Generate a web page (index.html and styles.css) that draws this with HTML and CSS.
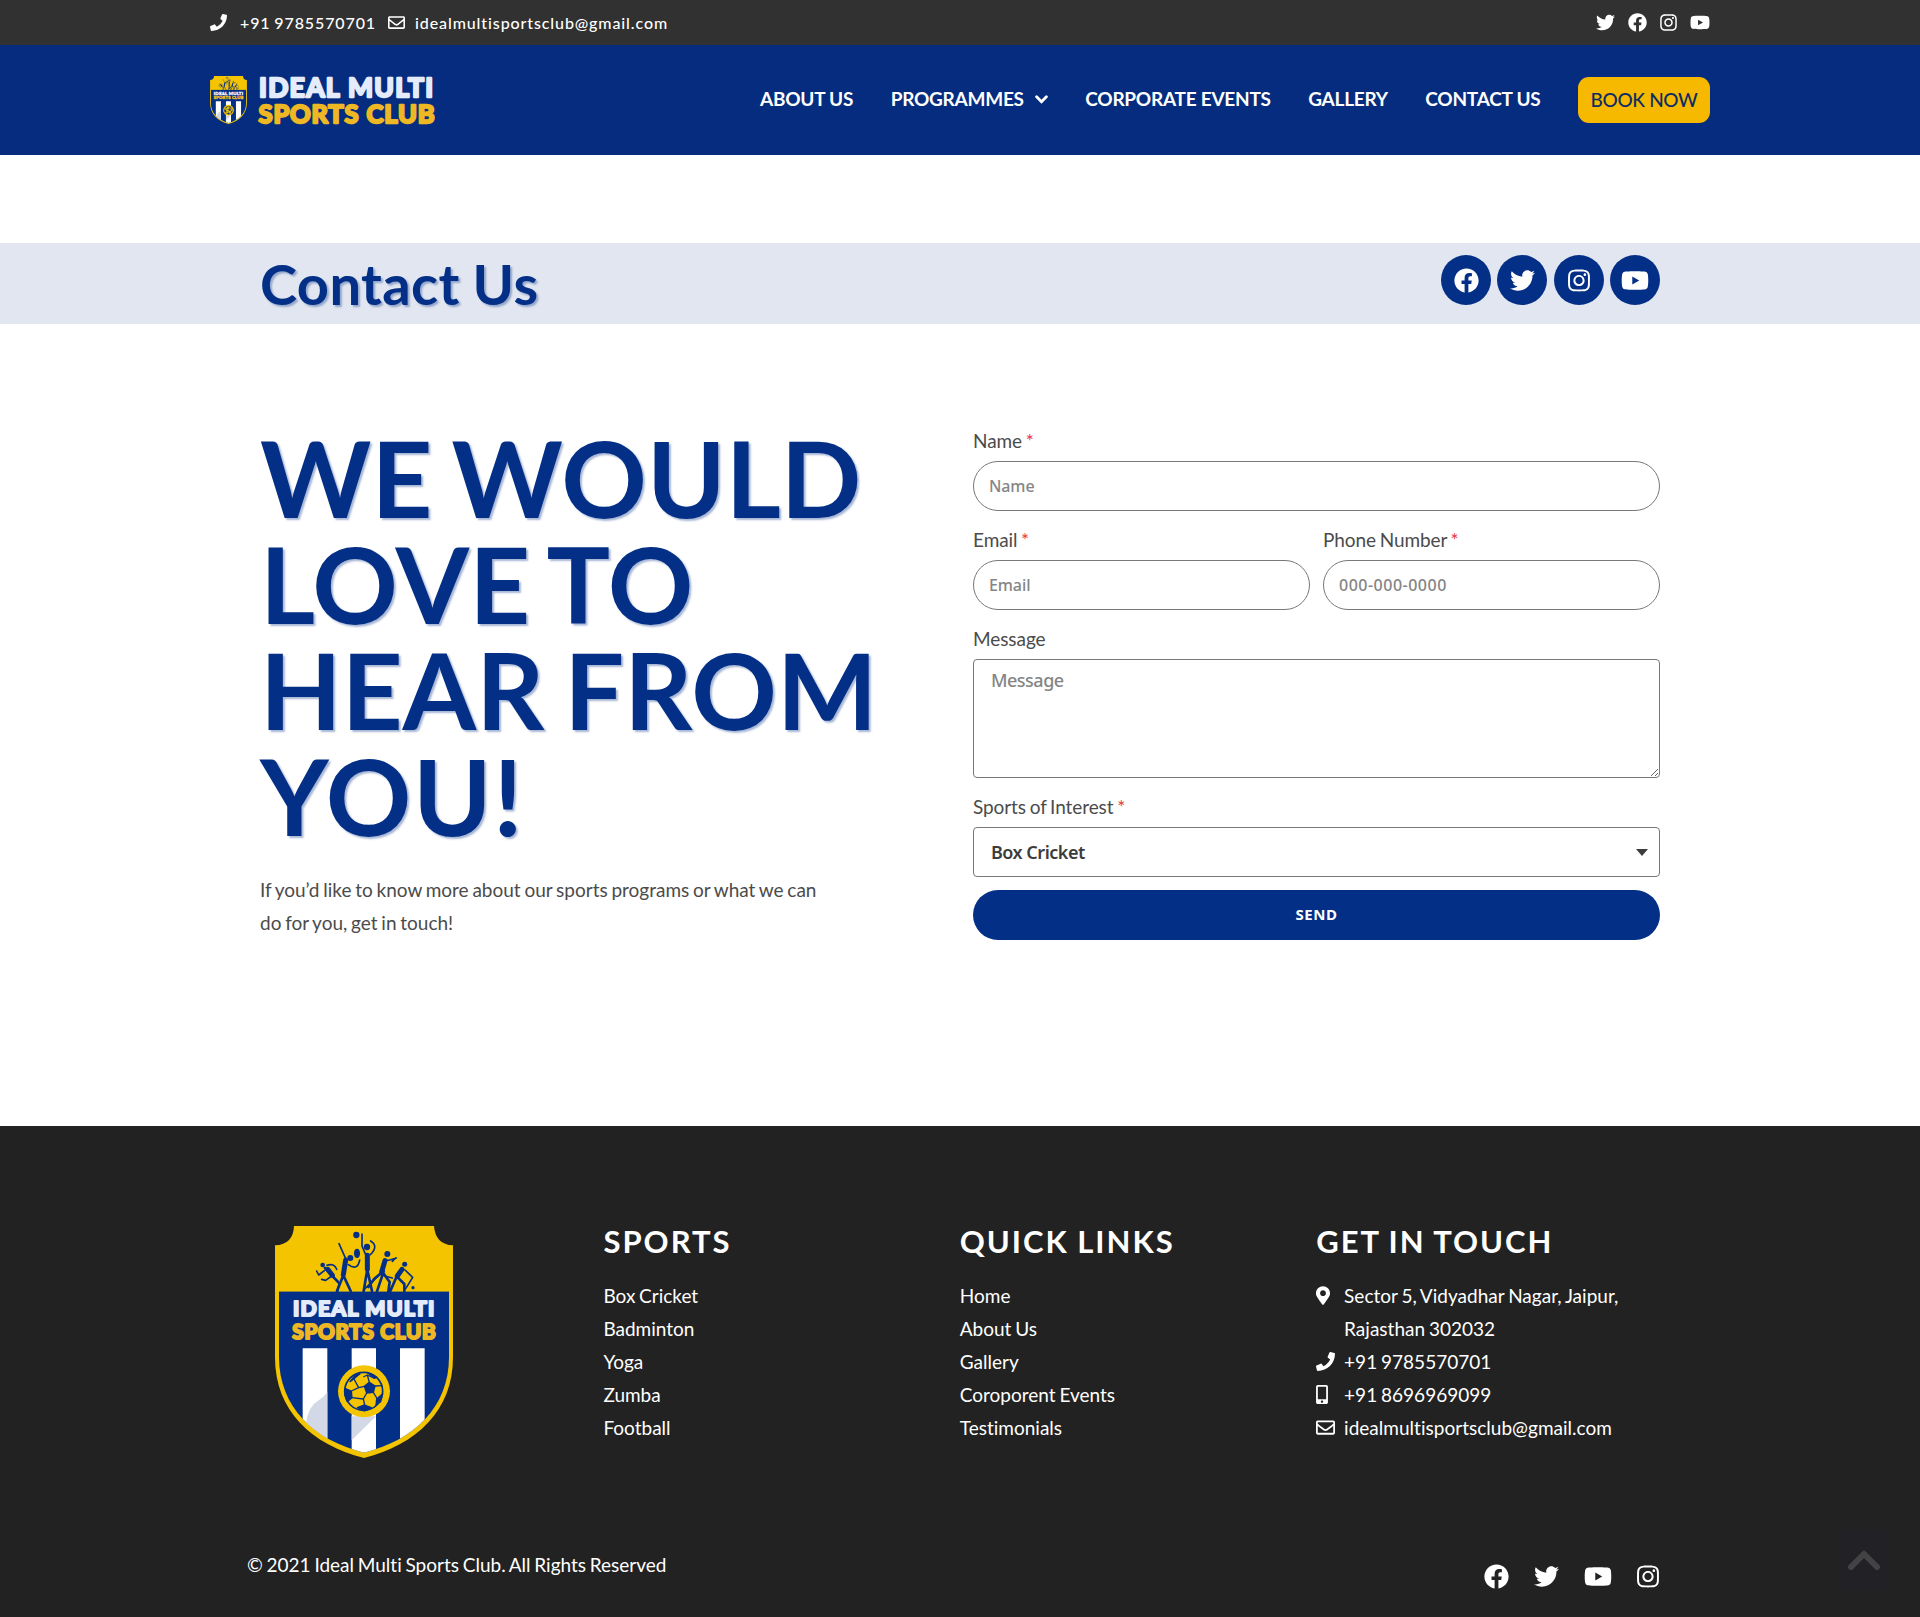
FILE: index.html
```html
<!DOCTYPE html>
<html lang="en">
<head>
<meta charset="utf-8">
<title>Contact Us - Ideal Multi Sports Club</title>
<link rel="stylesheet" href="styles.css">
</head>
<body>
<svg class="defs" width="0" height="0" aria-hidden="true">
  <symbol id="phone" viewBox="0 0 512 512"><path d="M493.4 24.6l-104-24c-11.3-2.6-22.9 3.3-27.5 13.9l-48 112c-4.2 9.8-1.4 21.3 6.9 28l60.6 49.6c-36 76.7-98.9 140.5-177.2 177.2l-49.6-60.6c-6.8-8.3-18.2-11.1-28-6.9l-112 48C3.9 366.5-2 378.1.6 389.4l24 104C27.1 504.2 36.7 512 48 512c256.1 0 464-207.5 464-464 0-11.2-7.7-20.9-18.6-23.4z"/></symbol>
  <symbol id="envelope" viewBox="0 0 512 512"><path d="M464 64H48C21.49 64 0 85.49 0 112v288c0 26.51 21.49 48 48 48h416c26.51 0 48-21.49 48-48V112c0-26.51-21.49-48-48-48zm0 48v40.805c-22.422 18.259-58.168 46.651-134.587 106.49-16.841 13.247-50.201 45.072-73.413 44.701-23.208.375-56.579-31.459-73.413-44.701C106.18 199.465 70.425 171.067 48 152.805V112h416zM48 400V214.398c22.914 18.251 55.409 43.862 104.938 82.646 21.857 17.205 60.134 55.186 103.062 54.955 42.717.231 80.509-37.199 103.053-54.947 49.528-38.783 82.032-64.401 104.947-82.653V400H48z"/></symbol>
  <symbol id="twitter" viewBox="0 0 512 512"><path d="M459.37 151.716c.325 4.548.325 9.097.325 13.645 0 138.72-105.583 298.558-298.558 298.558-59.452 0-114.68-17.219-161.137-47.106 8.447.974 16.568 1.299 25.34 1.299 49.055 0 94.213-16.568 130.274-44.832-46.132-.975-84.792-31.188-98.112-72.772 6.498.974 12.995 1.624 19.818 1.624 9.421 0 18.843-1.3 27.614-3.573-48.081-9.747-84.143-51.98-84.143-102.985v-1.299c13.969 7.797 30.214 12.67 47.431 13.319-28.264-18.843-46.781-51.005-46.781-87.391 0-19.492 5.197-37.36 14.294-52.954 51.655 63.675 129.3 105.258 216.365 109.807-1.624-7.797-2.599-15.918-2.599-24.04 0-57.828 46.782-104.934 104.934-104.934 30.213 0 57.502 12.67 76.67 33.137 23.715-4.548 46.456-13.32 66.599-25.34-7.798 24.366-24.366 44.833-46.132 57.827 21.117-2.273 41.584-8.122 60.426-16.243-14.292 20.791-32.161 39.308-52.628 54.253z"/></symbol>
  <symbol id="facebook" viewBox="0 0 512 512"><path d="M504 256C504 119 393 8 256 8S8 119 8 256c0 123.78 90.69 226.38 209.25 245V327.69h-63V256h63v-54.64c0-62.15 37-96.48 93.67-96.48 27.14 0 55.52 4.84 55.52 4.84v61h-31.28c-30.8 0-40.41 19.12-40.41 38.73V256h68.78l-11 71.69h-57.78V501C413.31 482.38 504 379.78 504 256z"/></symbol>
  <symbol id="instagram" viewBox="0 0 448 512"><path d="M224.1 141c-63.6 0-114.9 51.3-114.9 114.9s51.3 114.9 114.9 114.9S339 319.5 339 255.9 287.7 141 224.1 141zm0 189.6c-41.1 0-74.7-33.5-74.7-74.7s33.5-74.7 74.7-74.7 74.7 33.5 74.7 74.7-33.6 74.7-74.7 74.7zm146.4-194.3c0 14.9-12 26.8-26.8 26.8-14.9 0-26.8-12-26.8-26.8s12-26.8 26.8-26.8 26.8 12 26.8 26.8zm76.1 27.2c-1.7-35.9-9.9-67.7-36.2-93.9-26.2-26.2-58-34.4-93.9-36.2-37-2.1-147.9-2.1-184.9 0-35.8 1.7-67.6 9.9-93.9 36.1s-34.4 58-36.2 93.9c-2.1 37-2.1 147.9 0 184.9 1.7 35.9 9.9 67.7 36.2 93.9s58 34.4 93.9 36.2c37 2.1 147.9 2.1 184.9 0 35.9-1.7 67.7-9.9 93.9-36.2 26.2-26.2 34.4-58 36.2-93.9 2.1-37 2.1-147.8 0-184.8zM398.8 388c-7.8 19.6-22.9 34.7-42.6 42.6-29.5 11.7-99.5 9-132.1 9s-102.7 2.6-132.1-9c-19.6-7.8-34.7-22.9-42.6-42.6-11.7-29.5-9-99.5-9-132.1s-2.6-102.7 9-132.1c7.8-19.6 22.9-34.7 42.6-42.6 29.5-11.7 99.5-9 132.1-9s102.7-2.6 132.1 9c19.6 7.8 34.7 22.9 42.6 42.6 11.7 29.5 9 99.5 9 132.1s2.7 102.7-9 132.1z"/></symbol>
  <symbol id="youtube" viewBox="0 0 576 512"><path d="M549.655 124.083c-6.281-23.65-24.787-42.276-48.284-48.597C458.781 64 288 64 288 64S117.22 64 74.629 75.486c-23.497 6.322-42.003 24.947-48.284 48.597-11.412 42.867-11.412 132.305-11.412 132.305s0 89.438 11.412 132.305c6.281 23.65 24.787 41.5 48.284 47.821C117.22 448 288 448 288 448s170.78 0 213.371-11.486c23.497-6.321 42.003-24.171 48.284-47.821 11.412-42.867 11.412-132.305 11.412-132.305s0-89.438-11.412-132.305zm-317.51 213.508V175.185l142.739 81.205-142.739 81.201z"/></symbol>
  <symbol id="marker" viewBox="0 0 384 512"><path d="M172.268 501.67C26.97 291.031 0 269.413 0 192 0 85.961 85.961 0 192 0s192 85.961 192 192c0 77.413-26.97 99.031-172.268 309.67-9.535 13.774-29.93 13.773-39.464 0zM192 272c44.183 0 80-35.817 80-80s-35.817-80-80-80-80 35.817-80 80 35.817 80 80 80z"/></symbol>
  <symbol id="mobile" viewBox="0 0 320 512"><path d="M272 0H48C21.5 0 0 21.5 0 48v416c0 26.5 21.5 48 48 48h224c26.5 0 48-21.5 48-48V48c0-26.5-21.5-48-48-48zM160 480c-17.7 0-32-14.3-32-32s14.3-32 32-32 32 14.3 32 32-14.3 32-32 32zm112-108c0 6.6-5.4 12-12 12H60c-6.6 0-12-5.4-12-12V60c0-6.6 5.4-12 12-12h200c6.6 0 12 5.4 12 12v312z"/></symbol>
  <symbol id="crest" viewBox="75 47 534 696">
    <clipPath id="field"><path d="M87 243H597V440C597 592 490 690 342 727C194 690 87 592 87 440Z"/></clipPath>
    <path fill="#f4c400" d="M132 47H552Q556 103 609 105V440C609 602 500 702 342 743C184 702 75 602 75 440V105Q130 103 132 47Z"/>
    <g clip-path="url(#field)">
      <path fill="#042f86" d="M75 243H609V743H75Z"/>
      <path fill="#fff" d="M158 414H232V743H158ZM305 414H378V743H305ZM450 414H524V743H450Z"/>
      <path fill="#d3d8e7" d="M168 640Q174 588 206 570Q222 560 232 546V700H168ZM305 690L378 618H305Z"/>
    </g>
    <g transform="translate(165 45)" fill="none" stroke="#042f86" stroke-width="8" stroke-linecap="round" stroke-linejoin="round">
      <path stroke-width="5" d="M35 137L41 149L58 136M66 120Q88 112 95 132M80 152L62 165L50 162M85 155L102 175L98 200M102 55L122 100M130 118Q158 138 164 104M171 26V62L182 88M197 47Q222 62 196 88M240 106L254 104L274 98M226 145L180 190M300 134L323 156L302 190M262 158L238 152M272 98L262 108"/>
      <path d="M60 128L82 152L98 168M115 150L96 197M115 150L137 197M186 138L176 198M188 138L201 198M226 145L208 160L190 185M234 142L254 170L250 198M274 156L256 197M278 156L298 176V198M236 138L216 198"/>
      <path stroke-width="15" d="M68 132L82 150M122 104L115 148M187 90V132M240 106L230 140M291 132L277 152"/>
      <g fill="#042f86" stroke="none"><circle cx="53" cy="119" r="7"/><circle cx="136" cy="98" r="9"/><ellipse cx="156" cy="84" rx="9" ry="14"/><circle cx="154" cy="29" r="9.5"/><circle cx="186" cy="65" r="9.5"/><circle cx="247" cy="86" r="9"/><circle cx="299" cy="117" r="7.5"/><circle cx="324" cy="187" r="5"/></g>
    </g>
    <g class="crest-text" stroke-width="6.5">
      <text x="129" y="318" font-size="64" textLength="424" lengthAdjust="spacing" fill="#e4ebfa" stroke="#e4ebfa">IDEAL MULTI</text>
      <text x="127" y="385" font-size="62" textLength="430" lengthAdjust="spacing" fill="#edb823" stroke="#edb823">SPORTS CLUB</text>
    </g>
    <circle cx="342" cy="543" r="78" fill="#f4c400"/>
    <circle cx="341" cy="543" r="57" fill="#f4c400" stroke="#042f86" stroke-width="5"/>
    <g fill="#042f86" stroke="#042f86" stroke-width="4" stroke-linejoin="round">
      <path d="M343 528L358 516L375 527L370 546L350 548ZM300 514L316 494L330 490L308 508ZM285 534L304 542L306 562L292 574L284 552ZM322 592L344 584L364 592L344 602ZM380 566L398 550L392 574L378 584ZM352 487L380 500L374 504Z"/>
      <path fill="none" d="M343 528L326 532L304 542M326 532L312 506M358 516L352 494M375 527L396 526M370 546L382 566M350 548L340 566L344 584M340 566L306 562M340 500L352 494L374 504"/>
    </g>
  </symbol>
</svg>

<div class="topbar">
  <div class="wrap topbar-row">
    <div class="contact">
      <svg class="icon16"><use href="#phone"/></svg><span class="tel">+91 9785570701</span>
      <svg class="icon16"><use href="#envelope"/></svg><span class="mail">idealmultisportsclub@gmail.com</span>
    </div>
    <div class="top-social">
      <svg width="19" height="19"><use href="#twitter"/></svg>
      <svg width="19" height="19"><use href="#facebook"/></svg>
      <svg width="17" height="19"><use href="#instagram"/></svg>
      <svg width="20" height="19"><use href="#youtube"/></svg>
    </div>
  </div>
</div>

<header class="header">
  <div class="wrap header-row">
    <a class="brand">
      <svg class="brand-crest"><use href="#crest"/></svg>
      <svg class="brand-name crest-text" viewBox="0 0 178 52" stroke-width="2.4">
        <text x="2" y="22.5" font-size="26.5" textLength="174" lengthAdjust="spacing" fill="#e4ebfa" stroke="#e4ebfa">IDEAL MULTI</text>
        <text x="1.5" y="48.9" font-size="25.5" textLength="176" lengthAdjust="spacing" fill="#edb823" stroke="#edb823">SPORTS CLUB</text>
      </svg>
    </a>
    <nav class="nav">
      <a>ABOUT US</a>
      <a>PROGRAMMES<svg class="caret" viewBox="0 0 12 8"><path d="M1.5 1.5L6 6L10.5 1.5"/></svg></a>
      <a>CORPORATE EVENTS</a>
      <a>GALLERY</a>
      <a>CONTACT US</a>
      <a class="book">BOOK NOW</a>
    </nav>
  </div>
</header>

<section class="banner">
  <div class="inner banner-row">
    <h1>Contact Us</h1>
    <div class="round-social">
      <a><svg width="25" height="25"><use href="#facebook"/></svg></a>
      <a><svg width="25" height="25"><use href="#twitter"/></svg></a>
      <a><svg width="22" height="25"><use href="#instagram"/></svg></a>
      <a><svg width="28" height="25"><use href="#youtube"/></svg></a>
    </div>
  </div>
</section>

<main class="inner main">
  <div class="pitch">
    <h2>WE WOULD LOVE TO HEAR FROM <span class="you">YOU!</span></h2>
    <p>If you’d like to know more about our sports programs or what we can do for you, get in touch!</p>
  </div>
  <form class="form">
    <label class="field"><span>Name <i>*</i></span><input class="pill" placeholder="Name"></label>
    <div class="pair">
      <label class="field"><span>Email <i>*</i></span><input class="pill" placeholder="Email"></label>
      <label class="field"><span>Phone Number <i>*</i></span><input class="pill digits" placeholder="000-000-0000"></label>
    </div>
    <label class="field"><span>Message</span><textarea placeholder="Message"></textarea></label>
    <label class="field select"><span>Sports of Interest <i>*</i></span>
      <select><option>Box Cricket</option></select></label>
    <button type="button">SEND</button>
  </form>
</main>

<footer class="footer">
  <div class="footer-cols">
    <div class="col-logo"><svg class="footer-crest"><use href="#crest"/></svg></div>
    <div><h3>SPORTS</h3>
      <ul><li>Box Cricket</li><li>Badminton</li><li>Yoga</li><li>Zumba</li><li>Football</li></ul></div>
    <div><h3>QUICK LINKS</h3>
      <ul><li>Home</li><li>About Us</li><li>Gallery</li><li>Coroporent Events</li><li>Testimonials</li></ul></div>
    <div><h3>GET IN TOUCH</h3>
      <ul class="touch">
        <li><svg width="14" height="19"><use href="#marker"/></svg><span>Sector 5, Vidyadhar Nagar, Jaipur,<br>Rajasthan 302032</span></li>
        <li><svg width="19" height="19"><use href="#phone"/></svg><span>+91 9785570701</span></li>
        <li><svg width="12" height="19"><use href="#mobile"/></svg><span>+91 8696969099</span></li>
        <li><svg width="19" height="19"><use href="#envelope"/></svg><span>idealmultisportsclub@gmail.com</span></li>
      </ul></div>
  </div>
  <div class="footer-end">
    <p>© 2021 Ideal Multi Sports Club. All Rights Reserved</p>
    <div class="end-social">
      <svg width="25" height="25"><use href="#facebook"/></svg>
      <svg width="25" height="25"><use href="#twitter"/></svg>
      <svg width="28" height="25"><use href="#youtube"/></svg>
      <svg width="22" height="25"><use href="#instagram"/></svg>
    </div>
  </div>
  <a class="to-top"><svg viewBox="0 0 34 22"><path d="M4 18L17 5L30 18"/></svg></a>
</footer>
</body>
</html>
```
FILE: styles.css
```css
* { box-sizing: border-box; }
body { margin: 0; background: #fff; color: #4b4b4b; font: 19px/33px Lato, sans-serif; word-spacing: -1.1px; font-variant-ligatures: none; }
h1, h2, h3, p, ul { margin: 0; padding: 0; }
ul { list-style: none; }
svg { display: block; fill: currentColor; flex: none; }
.defs { position: absolute; }
.wrap { width: 1500px; margin: 0 auto; }
.inner { width: 1400px; margin: 0 auto; }

.topbar { background: #313131; color: #fff; }
.topbar-row { height: 45px; display: flex; justify-content: space-between; align-items: center; }
.contact { display: flex; align-items: center; font-size: 16px; font-weight: 500; letter-spacing: .89px; }
.icon16 { width: 17px; height: 17px; }
.tel { margin: 0 12px 0 13px; }
.mail { margin-left: 10px; }
.top-social { display: flex; gap: 13px; margin-top: -1px; }

.header { background: #052c7e; color: #fff; }
.header-row { height: 110px; display: flex; justify-content: space-between; align-items: center; }
.brand { display: flex; gap: 10px; align-items: center; }
.brand-crest { width: 37px; height: 48px; }
.brand-name { width: 178px; height: 52px; }
.crest-text { font-family: Lato, sans-serif; font-weight: 700; word-spacing: 0; stroke-linejoin: round; }
.nav { display: flex; align-items: center; gap: 37.5px; font-weight: 700; letter-spacing: -.25px; word-spacing: 0; }
.nav a { display: flex; align-items: center; padding-bottom: 3px; }
.caret { width: 13px; height: 9px; margin: 1px 0 0 11px; fill: none; stroke: #fff; stroke-width: 2.6; stroke-linecap: round; }
.nav .book { width: 132px; height: 46px; padding: 0 0 1px; justify-content: center; border-radius: 11px; background: #f7b900; color: #0d2d66; font-weight: 500; letter-spacing: -.35px; }

.banner { margin-top: 88px; background: #e1e6f0; }
.banner-row { height: 81px; display: flex; justify-content: space-between; }
h1, h2 { color: #042f86; font-weight: 700; text-shadow: 2px 2px 2px rgba(4, 47, 134, .35); }
h1 { font-size: 56px; line-height: 82px; letter-spacing: .4px; }
.round-social { display: flex; gap: 6.3px; margin-top: 12px; }
.round-social a { width: 50px; height: 50px; border-radius: 50%; background: #042f86; color: #fff; display: grid; place-items: center; }

.main { display: flex; justify-content: space-between; height: 802px; padding-top: 100px; }
.pitch { width: 640px; }
h2 { font-size: 106px; line-height: 106px; word-spacing: -6px; }
.you { letter-spacing: 1.5px; }
.pitch p { width: 570px; margin-top: 25px; }
.form { width: 687px; display: flex; flex-direction: column; }
.field { display: block; }
.field span { display: block; height: 33px; line-height: 33px; margin-bottom: 4px; letter-spacing: -.08px; }
i { color: #e8343f; font-style: normal; }
.pair { display: grid; grid-template-columns: 1fr 1fr; gap: 13px; }
.field + .field, .pair, .pair + .field { margin-top: 12px; }
.pair .field { margin-top: 0; }
input, textarea, select, button { display: block; width: 100%; height: 50px; margin: 0; border: 1px solid #77777c; background: #fff; color: #3c3c3c; font: 500 16px "Noto Sans", sans-serif; letter-spacing: -.1px; padding: 0 15px; outline: 0; }
.digits { letter-spacing: .5px; }
.pill { border-radius: 25px; }
::placeholder { color: #858585; opacity: 1; }
textarea { height: 119px; border-radius: 4px; padding: 8px 17px; font-size: 18px; letter-spacing: -.5px; }
select { appearance: none; border-radius: 4px; padding: 0 17px; font-size: 18px; font-weight: 600; letter-spacing: -.5px; }
.select { position: relative; }
.select::after { content: ""; position: absolute; right: 12px; bottom: 21px; border: 6px solid transparent; border-top: 7px solid #3c3c3c; border-bottom: 0; }
button { margin-top: 13px; padding-bottom: 2px; border: 0; border-radius: 25px; background: #042f86; color: #fff; font-weight: 700; font-size: 15px; letter-spacing: .6px; }

.footer { position: relative; height: 491px; background: #222; color: #fff; }
.footer-cols { width: 1426px; margin-left: 247px; padding-top: 100px; display: grid; grid-template-columns: repeat(4, 356.4px); }
.col-logo { padding-left: 28px; }
.footer-crest { width: 178px; height: 232px; }
h3 { font-size: 31px; line-height: 32px; letter-spacing: 2px; margin: -1px 0 22px; }
.touch li { display: flex; align-items: flex-start; letter-spacing: .02px; }
.touch svg { margin-top: 7px; }
.touch span { margin-left: auto; width: 328.5px; }
.footer-end { width: 1412px; margin: 90px 0 0 247px; display: flex; justify-content: space-between; }
.end-social { display: flex; align-items: center; gap: 25px; padding-top: 16px; }
.to-top { position: absolute; right: 31px; bottom: 27px; width: 50px; height: 60px; display: grid; place-items: center; background: #222226; }
.to-top svg { width: 34px; height: 22px; fill: none; stroke: #434345; stroke-width: 6; stroke-linecap: round; stroke-linejoin: round; }
```
